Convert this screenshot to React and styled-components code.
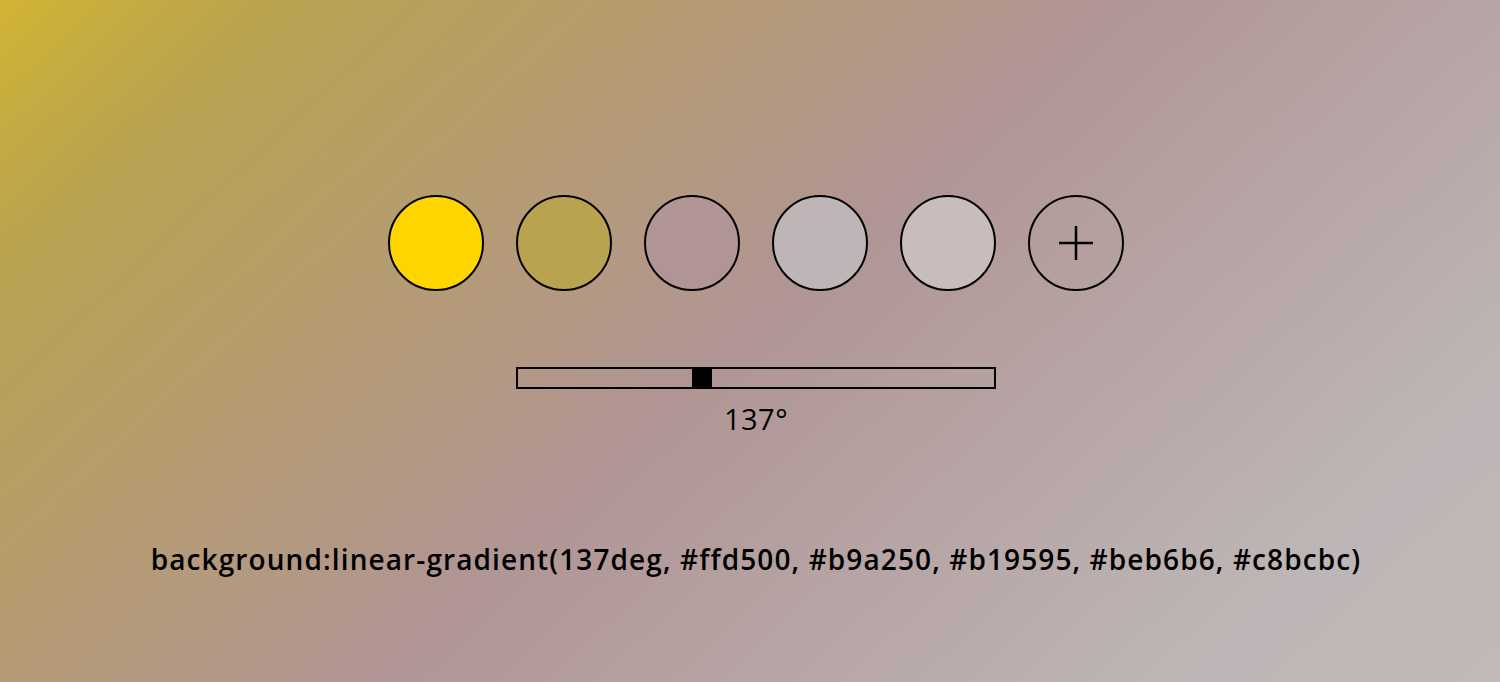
import React, { useState } from 'react';
import styled, { createGlobalStyle } from 'styled-components';

const GlobalStyle = createGlobalStyle`
	html, body {
		margin: 0;
		padding: 0;
	}
	body {
		font-family: 'Open Sans', 'Noto Sans', sans-serif;
		color: #000;
	}
`;

const Page = styled.main`
	box-sizing: border-box;
	height: 682px;
	padding: 195px 0 0 12px;
	display: flex;
	flex-direction: column;
	align-items: center;
	background-image: ${({ $gradient }) => $gradient};
	background-size: 100% 1643px;
	background-position: 0 -492px;
	background-repeat: no-repeat;
	overflow: hidden;
`;

const Swatches = styled.div`
	display: flex;
	gap: 32px;
`;

const Swatch = styled.button`
	box-sizing: border-box;
	width: 96px;
	height: 96px;
	border-radius: 50%;
	border: 2px solid #000;
	background: ${({ $color }) => $color || 'transparent'};
	padding: 0;
	display: flex;
	align-items: center;
	justify-content: center;
	cursor: pointer;
`;

const Plus = styled.svg`
	width: 38px;
	height: 38px;
`;

const Slider = styled.input`
	-webkit-appearance: none;
	appearance: none;
	box-sizing: border-box;
	width: 480px;
	height: 22px;
	margin: 76px 0 0;
	border: 2px solid #000;
	background: transparent;
	outline: none;

	&::-webkit-slider-runnable-track {
		height: 18px;
		background: transparent;
	}
	&::-webkit-slider-thumb {
		-webkit-appearance: none;
		width: 20px;
		height: 18px;
		background: #000;
		border: none;
		border-radius: 0;
		cursor: pointer;
	}
`;

const Angle = styled.div`
	margin-top: 11px;
	font-size: 29px;
	line-height: 38px;
	letter-spacing: 0.5px;
`;

const Code = styled.div`
	margin-top: 102px;
	font-size: 28px;
	font-weight: 600;
	line-height: 38px;
	letter-spacing: 1.1px;
	white-space: nowrap;
`;

const colors = ['#ffd500', '#b9a250', '#b19595', '#beb6b6', '#c8bcbc'];

export default function App() {
	const [angle, setAngle] = useState(137);
	const gradient = `linear-gradient(${angle}deg, ${colors.join(', ')})`;

	return (
		<>
			<GlobalStyle />
			<Page $gradient={gradient}>
				<Swatches>
					{colors.map((c) => (
						<Swatch key={c} $color={c} />
					))}
					<Swatch>
						<Plus viewBox="0 0 38 38">
							<path d="M19 2v34M2 19h34" stroke="#000" strokeWidth="2.5" fill="none" />
						</Plus>
					</Swatch>
				</Swatches>
				<Slider
					type="range"
					min="0"
					max="360"
					value={angle}
					onChange={(e) => setAngle(Number(e.target.value))}
				/>
				<Angle>{angle}°</Angle>
				<Code>background:{gradient}</Code>
			</Page>
		</>
	);
}
